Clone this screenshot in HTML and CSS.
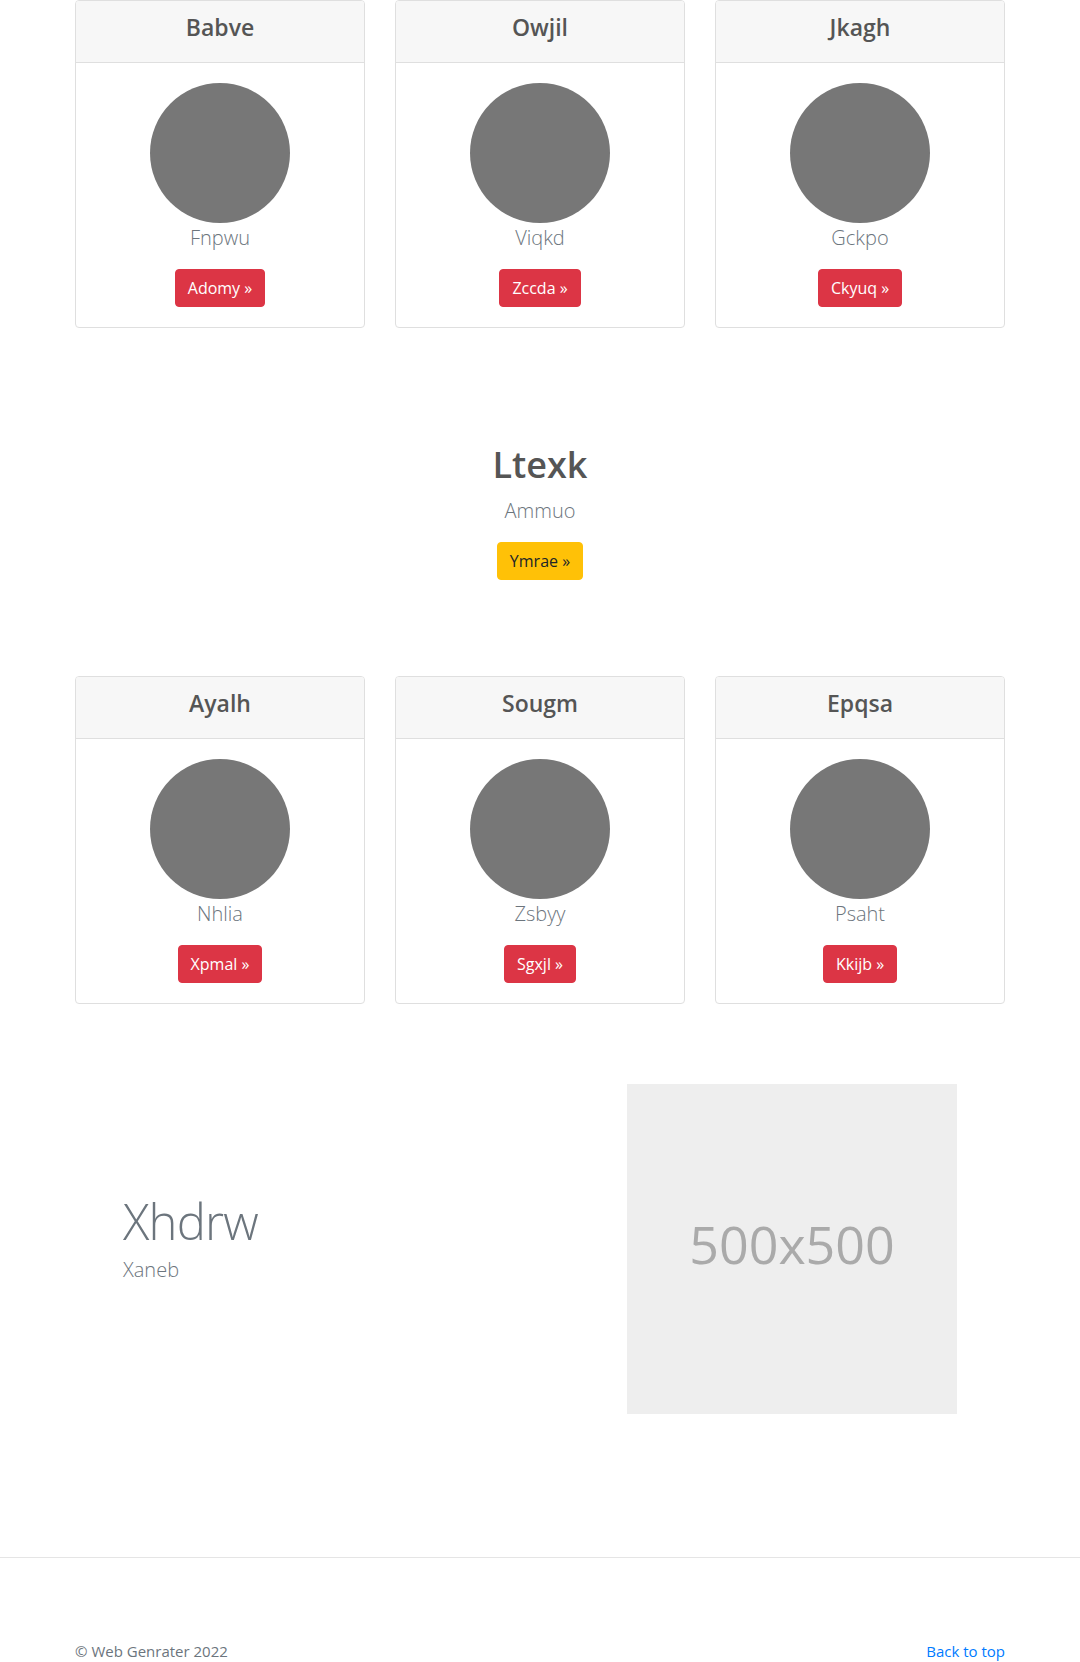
FILE: index.html
```html
<!DOCTYPE html>
<html lang="en">
<head>
<meta charset="utf-8">
<title>Page</title>
<link rel="stylesheet" href="styles.css">
</head>
<body>
<main>
  <div class="container">
    <div class="card-row">
      <div class="card">
        <div class="card-header"><h4>Babve</h4></div>
        <div class="card-body">
          <div class="avatar"></div>
          <p class="lead">Fnpwu</p>
          <a class="btn btn-danger" href="#">Adomy &raquo;</a>
        </div>
      </div>
      <div class="card">
        <div class="card-header"><h4>Owjil</h4></div>
        <div class="card-body">
          <div class="avatar"></div>
          <p class="lead">Viqkd</p>
          <a class="btn btn-danger" href="#">Zccda &raquo;</a>
        </div>
      </div>
      <div class="card">
        <div class="card-header"><h4>Jkagh</h4></div>
        <div class="card-body">
          <div class="avatar"></div>
          <p class="lead">Gckpo</p>
          <a class="btn btn-danger" href="#">Ckyuq &raquo;</a>
        </div>
      </div>
    </div>

    <section class="hero">
      <h1>Ltexk</h1>
      <p class="lead">Ammuo</p>
      <a class="btn btn-warning" href="#">Ymrae &raquo;</a>
    </section>

    <div class="card-row">
      <div class="card">
        <div class="card-header"><h4>Ayalh</h4></div>
        <div class="card-body">
          <div class="avatar"></div>
          <p class="lead">Nhlia</p>
          <a class="btn btn-danger" href="#">Xpmal &raquo;</a>
        </div>
      </div>
      <div class="card">
        <div class="card-header"><h4>Sougm</h4></div>
        <div class="card-body">
          <div class="avatar"></div>
          <p class="lead">Zsbyy</p>
          <a class="btn btn-danger" href="#">Sgxjl &raquo;</a>
        </div>
      </div>
      <div class="card">
        <div class="card-header"><h4>Epqsa</h4></div>
        <div class="card-body">
          <div class="avatar"></div>
          <p class="lead">Psaht</p>
          <a class="btn btn-danger" href="#">Kkijb &raquo;</a>
        </div>
      </div>
    </div>

    <section class="feature">
      <div class="feature-text">
        <h2 class="feature-heading">Xhdrw</h2>
        <p class="lead">Xaneb</p>
      </div>
      <div class="placeholder">500x500</div>
    </section>
  </div>
</main>

<footer class="footer">
  <div class="container footer-inner">
    <p class="copy">&copy; Web Genrater 2022</p>
    <p><a href="#">Back to top</a></p>
  </div>
</footer>
</body>
</html>
```

FILE: styles.css
```css
* { box-sizing: border-box; }

html, body {
  margin: 0;
  padding: 0;
}

body {
  font-family: "Open Sans", "Noto Sans", Arial, sans-serif;
  font-size: 16px;
  line-height: 1.5;
  color: #212529;
  background: #fff;
}

.container {
  width: 930px;
  margin: 0 auto;
}

.card-row {
  display: grid;
  grid-template-columns: repeat(3, 290px);
  column-gap: 30px;
}

.card {
  border: 1px solid #dfdfdf;
  border-radius: 4px;
  background: #fff;
  overflow: hidden;
}

.card-header {
  background: #f7f7f7;
  border-bottom: 1px solid #dfdfdf;
  padding: 12px 20px;
  text-align: center;
}

.card-header h4 {
  margin: 0 0 8px;
  font-size: 23px;
  line-height: 29px;
  font-weight: 600;
  color: #555;
}

.card-body {
  padding: 20px;
  text-align: center;
}

.avatar {
  width: 140px;
  height: 140px;
  border-radius: 50%;
  background: #777;
  margin: 0 auto;
}

.lead {
  font-size: 20px;
  font-weight: 300;
  line-height: 30px;
  color: #6c757d;
  margin: 0 0 16px;
}

.btn {
  display: inline-block;
  padding: 6px 12px;
  font-size: 16px;
  line-height: 24px;
  border-radius: 4px;
  text-decoration: none;
  border: 1px solid transparent;
}

.btn-danger {
  background: #dc3545;
  border-color: #dc3545;
  color: #fff;
}

.btn-warning {
  background: #ffc107;
  border-color: #ffc107;
  color: #212529;
}

.hero {
  text-align: center;
  padding: 113px 0 96px;
}

.hero h1 {
  margin: 0 0 7px;
  font-size: 36px;
  line-height: 48px;
  font-weight: 600;
  color: #555;
}

.feature {
  display: flex;
  align-items: center;
  justify-content: space-between;
  padding: 80px 48px 143px;
}

.feature-heading {
  margin: 0 0 9px;
  font-size: 49px;
  line-height: 1;
  font-weight: 300;
  letter-spacing: -0.8px;
  color: #6c757d;
}

.feature-text .lead {
  margin-bottom: 16px;
}

.placeholder {
  width: 330px;
  height: 330px;
  background: #eee;
  color: #aaa;
  display: flex;
  align-items: center;
  justify-content: center;
  font-size: 52px;
  padding-bottom: 10px;
}

.footer {
  border-top: 1px solid #e5e5e5;
  padding: 81px 0 48px;
}

.footer-inner {
  display: flex;
  justify-content: space-between;
}

.footer p {
  margin: 0;
  color: #6c757d;
  font-size: 15px;
  line-height: 24px;
}

.footer a {
  color: #007bff;
  text-decoration: none;
}
```
